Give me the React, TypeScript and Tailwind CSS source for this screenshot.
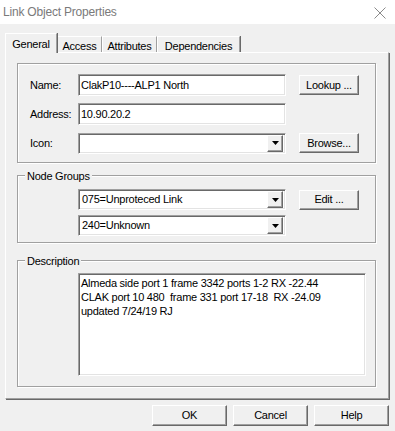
import React from "react";

const raised =
  "border border-t-white border-l-white border-r-[#696969] border-b-[#696969] shadow-[inset_-1px_-1px_0_#a0a0a0]";
const sunken =
  "border border-t-[#a0a0a0] border-l-[#a0a0a0] border-r-white border-b-white shadow-[inset_1px_1px_0_#696969,inset_-1px_-1px_0_#e3e3e3] bg-white";
const etched =
  "border border-[#a0a0a0] shadow-[inset_1px_1px_0_#fff,1px_1px_0_#fff]";

function Button({ label, className = "" }: { label: string; className?: string }) {
  return (
    <div
      className={`${raised} bg-[#f0f0f0] flex items-center justify-center ${className}`}
    >
      {label}
    </div>
  );
}

function Combo({ value, className = "" }: { value: string; className?: string }) {
  return (
    <div className={`${sunken} w-[208px] h-[21px] flex items-center p-[2px] ${className}`}>
      <span className="flex-1 pl-[1px] truncate">{value}</span>
      <div className={`${raised} bg-[#f0f0f0] w-[16px] h-[17px] flex items-center justify-center`}>
        <svg width="7" height="4" viewBox="0 0 7 4">
          <path d="M0 0h7L3.5 4z" fill="#000" />
        </svg>
      </div>
    </div>
  );
}

function Group({
  title,
  className = "",
  children,
}: {
  title?: string;
  className?: string;
  children: React.ReactNode;
}) {
  return (
    <div className={`relative ${etched} ${className}`}>
      {title && (
        <span className="absolute left-[7px] top-[-7px] px-[2px] h-[14px] leading-[14px] bg-[#f0f0f0]">
          {title}
        </span>
      )}
      {children}
    </div>
  );
}

const tabs = [
  { name: "General", w: "w-[52px]" },
  { name: "Access", w: "w-[45px]" },
  { name: "Attributes", w: "w-[55px]" },
  { name: "Dependencies", w: "w-[83px]" },
];

export default function App() {
  return (
    <div className="w-[395px] h-[431px] bg-[#f0f0f0] flex flex-col text-black text-[11px] tracking-[-0.25px] font-['Liberation_Sans',Arial,sans-serif] overflow-hidden">
      {/* title bar */}
      <div className="h-[24px] bg-white flex items-center justify-between pl-[3px] pr-[9px] shrink-0">
        <span className="text-[12px] tracking-[-0.2px] text-[#7a7a7a]">Link Object Properties</span>
        <svg width="12" height="12" viewBox="0 0 12 12" className="mt-[1px]">
          <path d="M0.5 0.5L11.5 11.5M11.5 0.5L0.5 11.5" stroke="#8a8a8a" strokeWidth="1" />
        </svg>
      </div>

      {/* tabs */}
      <div className="mt-[9px] ml-[5px] h-[19px] flex items-end">
        {tabs.map((t, i) =>
          i === 0 ? (
            <div
              key={t.name}
              className={`${t.w} h-[20px] mb-[-1px] relative z-10 bg-[#f0f0f0] border-l border-t border-r border-l-white border-t-white border-r-[#a0a0a0] shadow-[1px_0_0_#696969] flex items-start justify-center pt-[2px]`}
            >
              {t.name}
            </div>
          ) : (
            <div
              key={t.name}
              className={`${t.w} h-[16px] border-l border-t border-r border-l-white border-t-white border-r-[#a0a0a0] shadow-[1px_0_0_#696969] flex items-start justify-center pt-[1px]`}
            >
              {t.name}
            </div>
          )
        )}
      </div>

      {/* tab panel */}
      <div className="ml-[5px] w-[384px] h-[347px] border border-t-white border-l-white border-r-[#a0a0a0] border-b-[#a0a0a0] shadow-[1px_1px_0_#696969] px-[11px] pt-[10px] flex flex-col">
        <Group className="w-[359px] h-[100px] pt-[10px] pl-[12px] flex flex-col gap-[7px]">
          <div className="flex items-center h-[22px]">
            <span className="w-[48px]">Name:</span>
            <div className={`${sunken} w-[208px] h-[22px] flex items-center pl-[2px]`}>
              ClakP10----ALP1 North
            </div>
            <Button label="Lookup ..." className="ml-[13px] w-[60px] h-[20px]" />
          </div>
          <div className="flex items-center h-[22px]">
            <span className="w-[48px]">Address:</span>
            <div className={`${sunken} w-[208px] h-[22px] flex items-center pl-[2px]`}>
              10.90.20.2
            </div>
          </div>
          <div className="flex items-center h-[22px]">
            <span className="w-[48px]">Icon:</span>
            <Combo value="" />
            <Button label="Browse..." className="ml-[13px] w-[60px] h-[20px]" />
          </div>
        </Group>

        <Group title="Node Groups" className="mt-[12px] w-[359px] h-[68px] pt-[13px] pl-[60px] flex flex-col gap-[5px]">
          <div className="flex items-center">
            <Combo value="075=Unproteced Link" />
            <Button label="Edit ..." className="ml-[13px] w-[60px] h-[20px]" />
          </div>
          <div className="flex items-center">
            <Combo value="240=Unknown" />
          </div>
        </Group>

        <Group title="Description" className="mt-[17px] w-[359px] h-[127px] pt-[12px] pl-[60px]">
          <div className={`${sunken} w-[288px] h-[103px] pt-[2px] pl-[2px] leading-[14px] whitespace-pre`}>
            {"Almeda side port 1 frame 3342 ports 1-2 RX -22.44\nCLAK port 10 480  frame 331 port 17-18  RX -24.09\nupdated 7/24/19 RJ"}
          </div>
        </Group>
      </div>

      {/* dialog buttons */}
      <div className="mt-[6px] pr-[6px] flex justify-end gap-[6px]">
        <Button label="OK" className="w-[75px] h-[21px]" />
        <Button label="Cancel" className="w-[75px] h-[21px]" />
        <Button label="Help" className="w-[75px] h-[21px]" />
      </div>
    </div>
  );
}
